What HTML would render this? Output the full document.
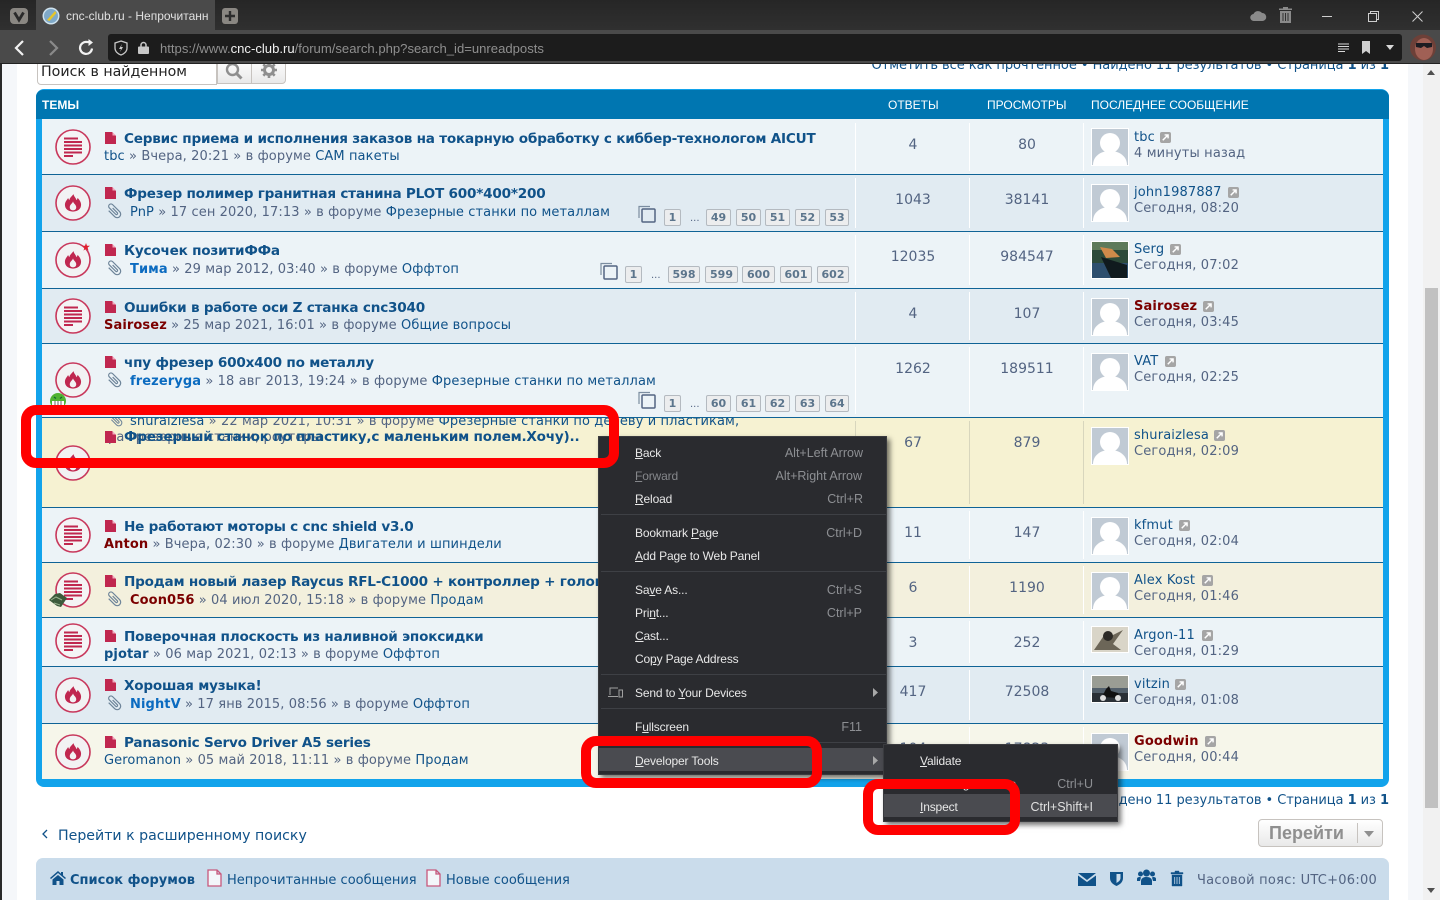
<!DOCTYPE html>
<html lang="ru"><head><meta charset="utf-8"><title>cnc-club.ru</title>
<style>
*{box-sizing:border-box}
html,body{margin:0;padding:0;width:1440px;height:900px;overflow:hidden;background:#fff}
body{position:relative;font-family:"DejaVu Sans","Liberation Sans",sans-serif;font-size:13px;color:#536482}
.a{position:absolute;white-space:nowrap;line-height:16px}
.row{position:absolute;left:42px;width:1341px}
.t{font-weight:bold;font-size:13.6px;letter-spacing:-.22px;color:#105289;left:124px;margin-top:1px}
.m{font-size:13px;color:#536482;margin-top:2px;letter-spacing:.1px}
.m b,.u b{font-weight:bold}
.bl{color:#105289}
.n{width:80px;text-align:center;font-size:14px;color:#536482;margin-top:1px}
.u{left:1134px;color:#105289;font-size:13px;margin-top:2px;letter-spacing:.15px}
.tm{left:1134px;color:#536482;font-size:13px;margin-top:2px;letter-spacing:.15px}
.k{margin-top:1px}
.div{position:absolute;width:1px;background:#fff}
.pg{position:absolute;height:17px;background:#ecedee;border:1px solid #b4bac0;border-radius:2px;font-size:11px;font-weight:bold;line-height:15px;color:#5c758c;text-align:center}
.sep{position:absolute;height:1px;background:#0f6396}
.mi{position:absolute;font-family:"Liberation Sans",sans-serif;font-size:12px;letter-spacing:-.15px;line-height:16px;color:#e8e8e8;white-space:nowrap}
.mi u{text-decoration:underline}
.sc{position:absolute;font-family:"Liberation Sans",sans-serif;font-size:12.5px;line-height:16px;color:#8d8f93;white-space:nowrap;text-align:right}
.ms{position:absolute;left:2px;height:1px;width:285px;background:#3e4045}
.rb{position:absolute;border:10px solid #f00;border-radius:15px;z-index:60}
svg{position:absolute;overflow:visible}
</style></head>
<body>
<svg width="0" height="0" style="position:absolute"><defs>
<symbol id="av" viewBox="0 0 38 38"><rect width="38" height="38" fill="#fff"/><rect x="1" y="1" width="36" height="36" fill="#c0cad4"/><circle cx="19" cy="15" r="10" fill="#fff"/><path d="M2 37C2 28 10 23 19 23S36 28 36 37Z" fill="#fff"/></symbol>
<symbol id="fl" viewBox="0 0 36 36"><circle cx="18" cy="18" r="17" fill="#f2f2f3" stroke="#c8385c" stroke-width="1.6"/><path transform="translate(2.700 2.800) scale(.85)" d="M18.500 7.500c1 3.500 3 4.500 3.500 7 .8-.6 1.300-1.500 1.300-2.600 2.700 2.400 4.200 5.300 4.200 8.100 0 4.600-3.500 8-9.500 8s-9.500-3.400-9.500-8c0-3.700 2.400-5.500 3.800-8 .4 1.200.8 1.900 1.500 2.500.2-2.800 2.700-4 4.700-7zM18 16c-.4 2.300-3.800 3.500-3.800 7 0 2.200 1.700 3.500 3.800 3.500s3.800-1.300 3.800-3.500c0-3.100-3.100-4.200-3.800-7z" fill="#c0274f" fill-rule="evenodd"/></symbol>
<symbol id="ls" viewBox="0 0 36 36"><circle cx="18" cy="18" r="17" fill="#f4f4f5" stroke="#c8385c" stroke-width="1.600"/><path d="M9 9.500h14M9 13h18M9 16.500h18M9 20h18M9 23.500h18M9 27h9" stroke="#c0274f" stroke-width="2" fill="none"/></symbol>
<symbol id="fi" viewBox="0 0 12 12"><path d="M0 0h7l4 4v8H0z" fill="#c0274f"/><path d="M7.500 0l3.500 3.500H7.500z" fill="#f2a9bd"/></symbol>
<symbol id="cl" viewBox="0 0 16 16"><path transform="rotate(-45 8 8)" d="M4.500 4v8.500a3.500 3.500 0 0 0 7 0V2.500a2.300 2.300 0 0 0-4.600 0V11.500a1.100 1.100 0 0 0 2.200 0V5" fill="none" stroke="#6d8499" stroke-width="1.200"/></symbol>
<symbol id="lk" viewBox="0 0 12 12"><rect width="12" height="12" rx="2" fill="#a5a5a5"/><path d="M3 9l5-5M5 3.200h3.800V7" stroke="#fff" stroke-width="1.600" fill="none"/></symbol>
<symbol id="cp" viewBox="0 0 18 18"><path d="M1 13V1.500h11" fill="none" stroke="#7b8da0" stroke-width="1.200"/><rect x="4" y="4" width="13" height="13" rx="1" fill="none" stroke="#536482" stroke-width="1.500"/></symbol>
</defs></svg>

<!-- page side -->
<div class="a" style="left:0;top:0;width:2px;height:900px;background:#2a2a2a"></div>
<div class="a" style="left:2px;top:64px;width:15px;height:836px;background:#f5f7fa"></div>
<div class="a" style="left:1408px;top:64px;width:15px;height:836px;background:#f5f7fa"></div>

<!-- search -->
<div class="a" style="left:37px;top:58px;width:180px;height:27px;background:#fff;border:1px solid #c7c3bf;border-radius:4px 0 0 4px;padding:4px 0 0 3px;font-size:14.2px;line-height:18px;color:#222">Поиск в найденном</div>
<div class="a" style="left:217px;top:58px;width:69px;height:26px;background:linear-gradient(#fff,#e9e9e9);border:1px solid #c7c3bf;border-radius:0 4px 4px 0"></div>
<div class="a" style="left:251px;top:60px;width:1px;height:24px;background:#c7c3bf"></div>
<svg style="left:225px;top:62px" width="18" height="18" viewBox="0 0 18 18"><circle cx="7.500" cy="7.500" r="5.500" fill="none" stroke="#8f8f8f" stroke-width="2.400"/><path d="M11.500 11.500l5 5" stroke="#8f8f8f" stroke-width="3"/></svg>
<svg style="left:261px;top:62px" width="16" height="16" viewBox="0 0 16 16"><circle cx="8" cy="8" r="4.500" fill="none" stroke="#8f8f8f" stroke-width="3"/><path d="M8 0v3M8 13v3M0 8h3M13 8h3M2.300 2.300l2.100 2.100M11.600 11.600l2.100 2.100M2.300 13.700l2.100-2.100M11.600 4.400l2.100-2.100" stroke="#8f8f8f" stroke-width="2.600"/></svg>
<div class="a" style="right:51px;top:58px;color:#105289;font-size:13px;letter-spacing:-.05px">Отметить все как прочтенное • Найдено 11 результатов • Страница <b>1</b> из <b>1</b></div>

<!-- forum block -->
<div class="a" style="left:36px;top:89px;width:1353px;height:698px;border-radius:8px;background:#12a3eb"></div>
<div class="a" style="left:36px;top:90px;width:1353px;height:29px;border-radius:7px 7px 0 0;background:#0076b1"></div>
<div class="a" style="left:42px;top:97px;color:#fff;font:bold 12px/16px 'Liberation Sans',sans-serif">ТЕМЫ</div>
<div class="a" style="left:888px;top:97px;color:#fff;font:12px/16px 'Liberation Sans',sans-serif">ОТВЕТЫ</div>
<div class="a" style="left:987px;top:97px;color:#fff;font:12px/16px 'Liberation Sans',sans-serif">ПРОСМОТРЫ</div>
<div class="a" style="left:1091px;top:97px;color:#fff;font:12px/16px 'Liberation Sans',sans-serif">ПОСЛЕДНЕЕ СООБЩЕНИЕ</div>

<div class="row" style="top:119px;height:55px;background:#ecf3f7"></div>
<div class="row" style="top:175px;height:56px;background:#e1ebf2"></div>
<div class="row" style="top:232px;height:56px;background:#ecf3f7"></div>
<div class="row" style="top:289px;height:54px;background:#e1ebf2"></div>
<div class="row" style="top:344px;height:73px;background:#ecf3f7"></div>
<div class="row" style="top:418px;height:89px;background:#f6f2d2;overflow:hidden">
 <svg style="left:67px;top:-5px" width="14" height="14"><use href="#cl"/></svg>
 <div class="a" style="left:88px;top:-4px;font-size:13px;letter-spacing:.1px;color:#536482"><span class="bl">shuraizlesa</span> » 22 мар 2021, 10:31 » в форуме <span class="bl">Фрезерные станки по дереву и пластикам,</span></div>
 <div class="a" style="left:66px;top:12px;font-size:13px;letter-spacing:.1px;color:#536482">раФрезерные станки, роутеры</div>
</div>
<div class="row" style="top:508px;height:54px;background:#ecf3f7"></div>
<div class="row" style="top:563px;height:54px;background:#f3f0dd"></div>
<div class="row" style="top:618px;height:48px;background:#ecf3f7"></div>
<div class="row" style="top:667px;height:56px;background:#e1ebf2"></div>
<div class="row" style="top:724px;height:55px;background:#f6f6ea"></div>
<div class="sep" style="left:42px;width:1341px;top:174px"></div>
<div class="sep" style="left:42px;width:1341px;top:231px"></div>
<div class="sep" style="left:42px;width:1341px;top:288px"></div>
<div class="sep" style="left:42px;width:1341px;top:343px"></div>
<div class="sep" style="left:42px;width:1341px;top:417px"></div>
<div class="sep" style="left:42px;width:1341px;top:507px"></div>
<div class="sep" style="left:42px;width:1341px;top:562px"></div>
<div class="sep" style="left:42px;width:1341px;top:617px"></div>
<div class="sep" style="left:42px;width:1341px;top:666px"></div>
<div class="sep" style="left:42px;width:1341px;top:723px"></div>

<!-- column dividers -->
<div class="div" style="left:855px;top:123px;height:48px"></div><div class="div" style="left:969px;top:123px;height:48px"></div><div class="div" style="left:1083px;top:123px;height:48px"></div>
<div class="div" style="left:855px;top:178px;height:50px"></div><div class="div" style="left:969px;top:178px;height:50px"></div><div class="div" style="left:1083px;top:178px;height:50px"></div>
<div class="div" style="left:855px;top:235px;height:50px"></div><div class="div" style="left:969px;top:235px;height:50px"></div><div class="div" style="left:1083px;top:235px;height:50px"></div>
<div class="div" style="left:855px;top:292px;height:48px"></div><div class="div" style="left:969px;top:292px;height:48px"></div><div class="div" style="left:1083px;top:292px;height:48px"></div>
<div class="div" style="left:855px;top:347px;height:67px"></div><div class="div" style="left:969px;top:347px;height:67px"></div><div class="div" style="left:1083px;top:347px;height:67px"></div>
<div class="div" style="left:855px;top:421px;height:83px;background:#d8d6bd"></div><div class="div" style="left:969px;top:421px;height:83px;background:#d8d6bd"></div><div class="div" style="left:1083px;top:421px;height:83px;background:#d8d6bd"></div>
<div class="div" style="left:855px;top:511px;height:48px"></div><div class="div" style="left:969px;top:511px;height:48px"></div><div class="div" style="left:1083px;top:511px;height:48px"></div>
<div class="div" style="left:855px;top:566px;height:48px"></div><div class="div" style="left:969px;top:566px;height:48px"></div><div class="div" style="left:1083px;top:566px;height:48px"></div>
<div class="div" style="left:855px;top:621px;height:42px"></div><div class="div" style="left:969px;top:621px;height:42px"></div><div class="div" style="left:1083px;top:621px;height:42px"></div>
<div class="div" style="left:855px;top:670px;height:50px"></div><div class="div" style="left:969px;top:670px;height:50px"></div><div class="div" style="left:1083px;top:670px;height:50px"></div>
<div class="div" style="left:855px;top:727px;height:49px"></div><div class="div" style="left:969px;top:727px;height:49px"></div><div class="div" style="left:1083px;top:727px;height:49px"></div>

<!-- row icons -->
<svg style="left:55px;top:129px" width="36" height="36"><use href="#ls"/></svg>
<svg style="left:55px;top:185px" width="36" height="36"><use href="#fl"/></svg>
<svg style="left:55px;top:242px" width="36" height="36"><use href="#fl"/></svg>
<svg style="left:55px;top:298px" width="36" height="36"><use href="#ls"/></svg>
<svg style="left:55px;top:362px" width="36" height="36"><use href="#fl"/></svg>
<svg style="left:55px;top:445px" width="36" height="36"><use href="#fl"/></svg>
<svg style="left:55px;top:517px" width="36" height="36"><use href="#ls"/></svg>
<svg style="left:55px;top:572px" width="36" height="36"><use href="#ls"/></svg>
<svg style="left:55px;top:623px" width="36" height="36"><use href="#ls"/></svg>
<svg style="left:55px;top:677px" width="36" height="36"><use href="#fl"/></svg>
<svg style="left:55px;top:734px" width="36" height="36"><use href="#fl"/></svg>
<svg style="left:82px;top:243px" width="8" height="8" viewBox="0 0 8 8"><path d="M4 0l1 2.800H8L5.600 4.600 6.500 7.600 4 5.800 1.500 7.600 2.400 4.600 0 2.800H3z" fill="#e0202f"/></svg>
<svg style="left:49px;top:393px" width="18" height="16" viewBox="0 0 18 16"><circle cx="9" cy="8" r="8" fill="#4fb332"/><rect x="3" y="8" width="12" height="6" fill="#fff"/><path d="M6 8v6M9 8v6M12 8v6" stroke="#666"/><path d="M5 4l2 1.500M13 4l-2 1.500" stroke="#163" stroke-width="1.300" fill="none"/></svg>
<svg style="left:48px;top:591px" width="20" height="17" viewBox="0 0 20 17"><path d="M1 9l6-6 5-1 7 5-6 9-4-1z" fill="#3c5a3a"/><path d="M3 9l5-3 6 3M6 12l6 2" stroke="#9ab28f" fill="none"/></svg>

<!-- file icons -->
<svg style="left:105px;top:132px" width="12" height="12"><use href="#fi"/></svg>
<svg style="left:105px;top:187px" width="12" height="12"><use href="#fi"/></svg>
<svg style="left:105px;top:244px" width="12" height="12"><use href="#fi"/></svg>
<svg style="left:105px;top:301px" width="12" height="12"><use href="#fi"/></svg>
<svg style="left:105px;top:356px" width="12" height="12"><use href="#fi"/></svg>
<svg style="left:105px;top:431px" width="12" height="12"><use href="#fi"/></svg>
<svg style="left:105px;top:520px" width="12" height="12"><use href="#fi"/></svg>
<svg style="left:105px;top:575px" width="12" height="12"><use href="#fi"/></svg>
<svg style="left:105px;top:630px" width="12" height="12"><use href="#fi"/></svg>
<svg style="left:105px;top:679px" width="12" height="12"><use href="#fi"/></svg>
<svg style="left:105px;top:736px" width="12" height="12"><use href="#fi"/></svg>
<!-- clips -->
<svg style="left:106px;top:203px" width="16" height="16"><use href="#cl"/></svg>
<svg style="left:106px;top:260px" width="16" height="16"><use href="#cl"/></svg>
<svg style="left:106px;top:372px" width="16" height="16"><use href="#cl"/></svg>
<svg style="left:106px;top:591px" width="16" height="16"><use href="#cl"/></svg>
<svg style="left:106px;top:695px" width="16" height="16"><use href="#cl"/></svg>

<!-- titles -->
<div class="a t" style="top:130px">Сервис приема и исполнения заказов на токарную обработку с киббер-технологом AICUT</div>
<div class="a t" style="top:185px">Фрезер полимер гранитная станина PLOT 600*400*200</div>
<div class="a t" style="top:242px">Кусочек позитиФФа</div>
<div class="a t" style="top:299px">Ошибки в работе оси Z станка cnc3040</div>
<div class="a t" style="top:354px">чпу фрезер 600x400 по металлу</div>
<div class="a t" style="top:428px">Фрезерный станок по пластику,с маленьким полем.Хочу)..</div>
<div class="a t" style="top:518px">Не работают моторы с cnc shield v3.0</div>
<div class="a t" style="top:573px">Продам новый лазер Raycus RFL-C1000 + контроллер + головка</div>
<div class="a t" style="top:628px">Поверочная плоскость из наливной эпоксидки</div>
<div class="a t" style="top:677px">Хорошая музыка!</div>
<div class="a t" style="top:734px">Panasonic Servo Driver A5 series</div>

<!-- meta -->
<div class="a m" style="left:104px;top:147px"><span class="bl">tbc</span> » Вчера, 20:21 » в форуме <span class="bl">CAM пакеты</span></div>
<div class="a m" style="left:130px;top:203px"><span class="bl">PnP</span> » 17 сен 2020, 17:13 » в форуме <span class="bl">Фрезерные станки по металлам</span></div>
<div class="a m" style="left:130px;top:260px"><b style="color:#0b6bc0">Тима</b> » 29 мар 2012, 03:40 » в форуме <span class="bl">Оффтоп</span></div>
<div class="a m" style="left:104px;top:316px"><b style="color:#7b0000">Sairosez</b> » 25 мар 2021, 16:01 » в форуме <span class="bl">Общие вопросы</span></div>
<div class="a m" style="left:130px;top:372px"><b style="color:#0b6bc0">frezeryga</b> » 18 авг 2013, 19:24 » в форуме <span class="bl">Фрезерные станки по металлам</span></div>
<div class="a m" style="left:104px;top:535px"><b style="color:#7b0000">Anton</b> » Вчера, 02:30 » в форуме <span class="bl">Двигатели и шпиндели</span></div>
<div class="a m" style="left:130px;top:591px"><b style="color:#7b0000">Coon056</b> » 04 июл 2020, 15:18 » в форуме <span class="bl">Продам</span></div>
<div class="a m" style="left:104px;top:645px"><b class="bl">pjotar</b> » 06 мар 2021, 02:13 » в форуме <span class="bl">Оффтоп</span></div>
<div class="a m" style="left:130px;top:695px"><b style="color:#0b6bc0">NightV</b> » 17 янв 2015, 08:56 » в форуме <span class="bl">Оффтоп</span></div>
<div class="a m" style="left:104px;top:751px"><span class="bl">Geromanon</span> » 05 май 2018, 11:11 » в форуме <span class="bl">Продам</span></div>

<!-- pagination -->
<svg style="left:638px;top:205px" width="18" height="18"><use href="#cp"/></svg>
<div class="pg" style="left:664px;top:209px;width:17px">1</div><div class="a" style="left:690px;top:211px;font-size:10px;color:#536482">...</div>
<div class="pg" style="left:706px;top:209px;width:25px">49</div><div class="pg" style="left:736px;top:209px;width:25px">50</div><div class="pg" style="left:765px;top:209px;width:25px">51</div><div class="pg" style="left:795px;top:209px;width:25px">52</div><div class="pg" style="left:825px;top:209px;width:24px">53</div>
<svg style="left:600px;top:262px" width="18" height="18"><use href="#cp"/></svg>
<div class="pg" style="left:625px;top:266px;width:17px">1</div><div class="a" style="left:651px;top:268px;font-size:10px;color:#536482">...</div>
<div class="pg" style="left:668px;top:266px;width:32px">598</div><div class="pg" style="left:705px;top:266px;width:33px">599</div><div class="pg" style="left:742px;top:266px;width:33px">600</div><div class="pg" style="left:780px;top:266px;width:32px">601</div><div class="pg" style="left:817px;top:266px;width:32px">602</div>
<svg style="left:638px;top:391px" width="18" height="18"><use href="#cp"/></svg>
<div class="pg" style="left:664px;top:395px;width:17px">1</div><div class="a" style="left:690px;top:397px;font-size:10px;color:#536482">...</div>
<div class="pg" style="left:706px;top:395px;width:25px">60</div><div class="pg" style="left:736px;top:395px;width:25px">61</div><div class="pg" style="left:765px;top:395px;width:25px">62</div><div class="pg" style="left:795px;top:395px;width:25px">63</div><div class="pg" style="left:825px;top:395px;width:24px">64</div>

<!-- counts -->
<div class="a n" style="left:873px;top:136px">4</div><div class="a n" style="left:987px;top:136px">80</div>
<div class="a n" style="left:873px;top:191px">1043</div><div class="a n" style="left:987px;top:191px">38141</div>
<div class="a n" style="left:873px;top:248px">12035</div><div class="a n" style="left:987px;top:248px">984547</div>
<div class="a n" style="left:873px;top:305px">4</div><div class="a n" style="left:987px;top:305px">107</div>
<div class="a n" style="left:873px;top:360px">1262</div><div class="a n" style="left:987px;top:360px">189511</div>
<div class="a n" style="left:873px;top:434px">67</div><div class="a n" style="left:987px;top:434px">879</div>
<div class="a n" style="left:873px;top:524px">11</div><div class="a n" style="left:987px;top:524px">147</div>
<div class="a n" style="left:873px;top:579px">6</div><div class="a n" style="left:987px;top:579px">1190</div>
<div class="a n" style="left:873px;top:634px">3</div><div class="a n" style="left:987px;top:634px">252</div>
<div class="a n" style="left:873px;top:683px">417</div><div class="a n" style="left:987px;top:683px">72508</div>
<div class="a n" style="left:873px;top:740px">104</div><div class="a n" style="left:987px;top:740px">17823</div>

<!-- avatars -->
<svg style="left:1091px;top:128px" width="38" height="38"><use href="#av"/></svg>
<svg style="left:1091px;top:184px" width="38" height="38"><use href="#av"/></svg>
<svg style="left:1091px;top:241px" width="38" height="38" viewBox="0 0 38 38"><rect width="38" height="38" fill="#fff"/><rect x="1" y="1" width="36" height="36" fill="#2d4a3a"/><rect x="1" y="1" width="36" height="8" fill="#5e7a5a"/><rect x="1" y="22" width="36" height="15" fill="#2e4f6e"/><path d="M10 16L36 24V37H20Z" fill="#101a1e"/><path d="M9 6l12 2 8 8-14 1z" fill="#cf8a4a"/></svg>
<svg style="left:1091px;top:298px" width="38" height="38"><use href="#av"/></svg>
<svg style="left:1091px;top:353px" width="38" height="38"><use href="#av"/></svg>
<svg style="left:1091px;top:427px" width="38" height="38"><use href="#av"/></svg>
<svg style="left:1091px;top:517px" width="38" height="38"><use href="#av"/></svg>
<svg style="left:1091px;top:572px" width="38" height="38"><use href="#av"/></svg>
<svg style="left:1091px;top:626px" width="38" height="27" viewBox="0 0 38 27"><rect width="38" height="27" fill="#fff"/><rect x="1" y="1" width="36" height="25" fill="#d9d5c8"/><path d="M3 24L14 8l6 2 12-6-10 14 8 6H8z" fill="#6c6658"/><circle cx="17" cy="10" r="5" fill="#2c2a26"/></svg>
<svg style="left:1091px;top:675px" width="38" height="28" viewBox="0 0 38 28"><rect width="38" height="28" fill="#fff"/><rect x="1" y="1" width="36" height="26" fill="#53606b"/><rect x="1" y="1" width="36" height="12" fill="#9a9d94"/><rect x="1" y="18" width="36" height="9" fill="#2a3036"/><path d="M11 22l4-8 3-3 2 5 7 2 1 5z" fill="#111"/><circle cx="12" cy="23" r="3" fill="#ddd"/><circle cx="27" cy="23" r="3" fill="#ddd"/></svg>
<svg style="left:1091px;top:733px" width="38" height="38"><use href="#av"/></svg>

<!-- users -->
<div class="a u" style="top:128px">tbc</div><svg class="k" style="left:1160px;top:131px" width="11" height="11"><use href="#lk"/></svg><div class="a tm" style="top:144px">4 минуты назад</div>
<div class="a u" style="top:183px">john1987887</div><svg class="k" style="left:1228px;top:186px" width="11" height="11"><use href="#lk"/></svg><div class="a tm" style="top:199px">Сегодня, 08:20</div>
<div class="a u" style="top:240px">Serg</div><svg class="k" style="left:1170px;top:243px" width="11" height="11"><use href="#lk"/></svg><div class="a tm" style="top:256px">Сегодня, 07:02</div>
<div class="a u" style="top:297px"><b style="color:#7b0000">Sairosez</b></div><svg class="k" style="left:1203px;top:300px" width="11" height="11"><use href="#lk"/></svg><div class="a tm" style="top:313px">Сегодня, 03:45</div>
<div class="a u" style="top:352px">VAT</div><svg class="k" style="left:1165px;top:355px" width="11" height="11"><use href="#lk"/></svg><div class="a tm" style="top:368px">Сегодня, 02:25</div>
<div class="a u" style="top:426px">shuraizlesa</div><svg class="k" style="left:1214px;top:429px" width="11" height="11"><use href="#lk"/></svg><div class="a tm" style="top:442px">Сегодня, 02:09</div>
<div class="a u" style="top:516px">kfmut</div><svg class="k" style="left:1179px;top:519px" width="11" height="11"><use href="#lk"/></svg><div class="a tm" style="top:532px">Сегодня, 02:04</div>
<div class="a u" style="top:571px">Alex Kost</div><svg class="k" style="left:1202px;top:574px" width="11" height="11"><use href="#lk"/></svg><div class="a tm" style="top:587px">Сегодня, 01:46</div>
<div class="a u" style="top:626px">Argon-11</div><svg class="k" style="left:1202px;top:629px" width="11" height="11"><use href="#lk"/></svg><div class="a tm" style="top:642px">Сегодня, 01:29</div>
<div class="a u" style="top:675px">vitzin</div><svg class="k" style="left:1175px;top:678px" width="11" height="11"><use href="#lk"/></svg><div class="a tm" style="top:691px">Сегодня, 01:08</div>
<div class="a u" style="top:732px"><b style="color:#7b0000">Goodwin</b></div><svg class="k" style="left:1205px;top:735px" width="11" height="11"><use href="#lk"/></svg><div class="a tm" style="top:748px">Сегодня, 00:44</div>

<!-- below table -->
<div class="a" style="right:51px;top:793px;color:#105289;font-size:13px;letter-spacing:-.05px">Найдено 11 результатов • Страница <b>1</b> из <b>1</b></div>
<svg style="left:41px;top:829px" width="8" height="10" viewBox="0 0 8 10"><path d="M6 1L2 5l4 4" fill="none" stroke="#105289" stroke-width="1.300"/></svg>
<div class="a" style="left:58px;top:828px;font-size:14.150px;color:#105289">Перейти к расширенному поиску</div>
<div class="a" style="left:1258px;top:819px;width:125px;height:28px;border:1px solid #c7c3bf;border-radius:4px;background:linear-gradient(#fff,#e9e9e9)"></div>
<div class="a" style="left:1269px;top:825px;font:bold 18px/16px 'Liberation Sans',sans-serif;color:#8f8f8f">Перейти</div>
<div class="a" style="left:1357px;top:823px;width:1px;height:20px;background:#c7c3bf"></div>
<svg style="left:1364px;top:831px" width="11" height="6"><path d="M0 0h10L5 6z" fill="#8f8f8f"/></svg>

<!-- footer -->
<div class="a" style="left:36px;top:858px;width:1353px;height:42px;background:#cadceb;border-radius:7px 7px 0 0"></div>
<svg style="left:50px;top:871px" width="16" height="14" viewBox="0 0 16 14"><path d="M8 0L0 7l1 1 7-6 7 6 1-1-3-2.600V1h-2v1.700zM2.500 8.500L8 4l5.500 4.500V14H9.500v-4h-3v4H2.500z" fill="#105289"/></svg>
<div class="a" style="left:70px;top:873px;font-size:13px;font-weight:bold;color:#105289">Список форумов</div>
<svg style="left:207px;top:869px" width="15" height="18" viewBox="0 0 15 18"><path d="M1 1h9l4 4v12H1zM10 1v4h4" fill="#f3f6fa" stroke="#c8587c" stroke-width="1.300"/></svg>
<div class="a" style="left:227px;top:873px;font-size:13px;color:#105289">Непрочитанные сообщения</div>
<svg style="left:426px;top:869px" width="15" height="18" viewBox="0 0 15 18"><path d="M1 1h9l4 4v12H1zM10 1v4h4" fill="#f3f6fa" stroke="#c8587c" stroke-width="1.300"/></svg>
<div class="a" style="left:446px;top:873px;font-size:13px;color:#105289">Новые сообщения</div>
<svg style="left:1078px;top:872px" width="18" height="14" viewBox="0 0 18 14"><path d="M0 1h18L9 8zM0 3.500L9 10l9-6.500V14H0z" fill="#105289"/></svg>
<svg style="left:1110px;top:871px" width="13" height="15" viewBox="0 0 13 15"><path d="M0 1h13v6c0 4-3 6.500-6.500 8C3 13.500 0 11 0 7z" fill="#105289"/><path d="M6.500 3h4v4c0 2-1.500 3.500-4 5z" fill="#cadceb"/></svg>
<svg style="left:1137px;top:869px" width="19" height="17" viewBox="0 0 19 17"><circle cx="9.500" cy="4" r="3.500" fill="#105289"/><circle cx="3.500" cy="5" r="2.500" fill="#105289"/><circle cx="15.500" cy="5" r="2.500" fill="#105289"/><path d="M4 16v-4c0-2.500 2-4 5.500-4S15 9.500 15 12v4zM0 12V10c0-1.500 1-2 3-2l1 .5L3 12zM19 12V10c0-1.500-1-2-3-2l-1 .5L16 12z" fill="#105289"/></svg>
<svg style="left:1171px;top:871px" width="12" height="15" viewBox="0 0 12 15"><path d="M4 0h4v1.500h4V3H0V1.500h4zM1 4h10v11H1zM3.500 6v7M6 6v7M8.500 6v7" fill="#105289" stroke="#105289" stroke-width=".4"/><path d="M3.700 6v7M6 6v7M8.300 6v7" stroke="#cadceb" stroke-width=".8"/></svg>
<div class="a" style="right:63px;top:873px;font-size:13px;letter-spacing:.25px;color:#536482">Часовой пояс: UTC+06:00</div>

<!-- page scrollbar -->
<div class="a" style="left:1423px;top:64px;width:17px;height:836px;background:#f1f1f1"></div>
<div class="a" style="left:1425px;top:288px;width:13px;height:520px;background:#c1c1c1"></div>
<svg style="left:1427px;top:70px" width="9" height="6"><path d="M0 5h8L4 0z" fill="#505050"/></svg>
<svg style="left:1427px;top:888px" width="9" height="6"><path d="M0 0h8L4 5z" fill="#505050"/></svg>

<!-- browser chrome -->
<div class="a" style="left:0;top:0;width:1440px;height:30px;background:linear-gradient(#262626,#303030);z-index:30"></div>
<div class="a" style="left:0;top:30px;width:1440px;height:34px;background:#4a4a4a;z-index:30"></div>
<div class="a" style="left:0;top:63px;width:1440px;height:1px;background:#222;z-index:30"></div>
<div class="a" style="left:36px;top:0;width:179px;height:32px;background:#4a4a4a;z-index:31"></div>
<svg style="left:10px;top:8px;z-index:32" width="18" height="16" viewBox="0 0 18 16"><rect width="18" height="16" rx="4" fill="#8a8782"/><path d="M4.500 4.500L9 12l4.500-7.500" fill="none" stroke="#2a2a2a" stroke-width="2.800"/></svg>
<svg style="left:42px;top:7px;z-index:32" width="18" height="18" viewBox="0 0 18 18"><circle cx="9" cy="9" r="8.500" fill="#cfe2ee"/><circle cx="9" cy="9" r="7" fill="#7fa9c8"/><path d="M5 13L13 4l1.500 2-7 8z" fill="#e6c62a"/></svg>
<div class="a" style="left:66px;top:8px;width:143px;overflow:hidden;z-index:32;font:12px/16px 'Liberation Sans',sans-serif;color:#e0e0e0">cnc-club.ru - Непрочитанные сообщения</div>
<svg style="left:222px;top:8px;z-index:32" width="16" height="16" viewBox="0 0 16 16"><rect width="16" height="16" rx="3" fill="#8a8782"/><path d="M8 3v10M3 8h10" stroke="#2d2d2d" stroke-width="2.400"/></svg>
<svg style="left:12px;top:39px;z-index:32" width="14" height="18" viewBox="0 0 14 18"><path d="M11 2L4 9l7 7" fill="none" stroke="#f2f2f2" stroke-width="2.200"/></svg>
<svg style="left:47px;top:39px;z-index:32" width="14" height="18" viewBox="0 0 14 18"><path d="M3 2l7 7-7 7" fill="none" stroke="#8a8a8a" stroke-width="2.200"/></svg>
<svg style="left:78px;top:39px;z-index:32" width="17" height="17" viewBox="0 0 17 17"><path d="M14 9.500A6 6 0 1 1 9 3h3" fill="none" stroke="#f2f2f2" stroke-width="2.200"/><path d="M10.500 0v7L15 3.500z" fill="#f2f2f2"/></svg>
<div class="a" style="left:108px;top:34px;width:1294px;height:27px;background:#1c1c1c;border-radius:3px;z-index:32"></div>
<svg style="left:114px;top:40px;z-index:33" width="14" height="16" viewBox="0 0 14 16"><path d="M7 1l6 2v5c0 3.500-3 6-6 7-3-1-6-3.500-6-7V3z" fill="none" stroke="#c8c8c8" stroke-width="1.300"/><path d="M8 4L5 9h2l-1 3 3-5H7z" fill="#c8c8c8"/></svg>
<svg style="left:138px;top:41px;z-index:33" width="11" height="13" viewBox="0 0 11 13"><path d="M3 6V4a2.500 2.500 0 0 1 5 0v2" fill="none" stroke="#c8c8c8" stroke-width="1.500"/><rect y="5.500" width="11" height="7.500" rx="1" fill="#c8c8c8"/></svg>
<div class="a" style="left:160px;top:41px;z-index:33;font:13.100px/16px 'Liberation Sans',sans-serif;color:#8f8f8f">https://www.<span style="color:#f0f0f0">cnc-club.ru</span>/forum/search.php?search_id=unreadposts</div>
<svg style="left:1338px;top:43px;z-index:33" width="11" height="9"><path d="M0 1h11M0 3.500h11M0 6h11M0 8.500h7" stroke="#d8d8d8" stroke-width="1"/></svg>
<svg style="left:1362px;top:41px;z-index:33" width="8" height="13"><path d="M0 0h8v13L4 10 0 13z" fill="#cfcfcf"/></svg>
<svg style="left:1386px;top:45px;z-index:33" width="8" height="5"><path d="M0 0h8L4 5z" fill="#d8d8d8"/></svg>
<svg style="left:1410px;top:34px;z-index:33" width="26" height="27" viewBox="0 0 26 27"><circle cx="13" cy="13.500" r="13" fill="#6d4038"/><ellipse cx="14" cy="15" rx="9" ry="11" fill="#a06055"/><path d="M6 9h16v4l-5 1-3-2-3 2-5-1z" fill="#1c1c22"/></svg>
<svg style="left:1250px;top:10px;z-index:33" width="16" height="11" viewBox="0 0 16 11"><path d="M4 11a3.500 3.500 0 0 1-.5-7A5 5 0 0 1 12 3a4 4 0 0 1 .5 8z" fill="#8a8a8a"/></svg>
<svg style="left:1279px;top:7px;z-index:33" width="13" height="16" viewBox="0 0 13 16"><path d="M4 0h5v1.500h4V3H0V1.500h4zM1 4h11v12H1z" fill="#8a8a8a"/><path d="M4 6v8M6.500 6v8M9 6v8" stroke="#303030" stroke-width="1"/></svg>
<div class="a" style="left:1322px;top:16px;width:10px;height:1px;background:#cfcfcf;z-index:33"></div>
<svg style="left:1368px;top:11px;z-index:33" width="11" height="11"><path d="M2.500 2.500V.5h8v8h-2M.5 2.500h8v8h-8z" fill="none" stroke="#cfcfcf"/></svg>
<svg style="left:1412px;top:11px;z-index:33" width="11" height="11"><path d="M.5.500l10 10M10.500.5l-10 10" stroke="#cfcfcf"/></svg>

<!-- context menu -->
<div class="a" style="left:598px;top:436px;width:289px;height:339px;background:#2a2b2f;border:1px solid #3a3b3f;z-index:40;box-shadow:3px 3px 5px rgba(0,0,0,.55)">
 <div class="ms" style="top:77px"></div><div class="ms" style="top:134px"></div><div class="ms" style="top:237px"></div><div class="ms" style="top:271px"></div><div class="ms" style="top:305px"></div>
 <div style="position:absolute;left:0;top:311px;width:287px;height:23px;background:#4a4b50"></div>
 <div class="mi" style="left:36px;top:8px"><u>B</u>ack</div><div class="sc" style="right:23px;top:8px">Alt+Left Arrow</div>
 <div class="mi" style="left:36px;top:31px;color:#85878b"><u>F</u>orward</div><div class="sc" style="right:24px;top:31px">Alt+Right Arrow</div>
 <div class="mi" style="left:36px;top:54px"><u>R</u>eload</div><div class="sc" style="right:23px;top:54px">Ctrl+R</div>
 <div class="mi" style="left:36px;top:88px">Bookmark <u>P</u>age</div><div class="sc" style="right:24px;top:88px">Ctrl+D</div>
 <div class="mi" style="left:36px;top:111px"><u>A</u>dd Page to Web Panel</div>
 <div class="mi" style="left:36px;top:145px">Sa<u>v</u>e As...</div><div class="sc" style="right:24px;top:145px">Ctrl+S</div>
 <div class="mi" style="left:36px;top:168px">Pri<u>n</u>t...</div><div class="sc" style="right:24px;top:168px">Ctrl+P</div>
 <div class="mi" style="left:36px;top:191px"><u>C</u>ast...</div>
 <div class="mi" style="left:36px;top:214px">Co<u>p</u>y Page Address</div>
 <svg style="left:9px;top:250px" width="15" height="11" viewBox="0 0 15 11"><path d="M2 8V1h8M0 9.500h10" fill="none" stroke="#a0a0a0"/><rect x="11" y="3" width="3.500" height="7" fill="none" stroke="#a0a0a0"/></svg>
 <div class="mi" style="left:36px;top:248px">Send to <u>Y</u>our Devices</div>
 <svg style="left:274px;top:251px" width="6" height="9"><path d="M0 0l5 4.500L0 9z" fill="#a8a8a8"/></svg>
 <div class="mi" style="left:36px;top:282px">F<u>u</u>llscreen</div><div class="sc" style="right:24px;top:282px">F11</div>
 <div class="mi" style="left:36px;top:316px"><u>D</u>eveloper Tools</div>
 <svg style="left:274px;top:319px" width="6" height="9"><path d="M0 0l5 4.500L0 9z" fill="#a8a8a8"/></svg>
</div>
<div class="a" style="left:883px;top:744px;width:235px;height:78px;background:#2a2b2f;border:1px solid #3a3b3f;z-index:41;box-shadow:3px 3px 5px rgba(0,0,0,.55)">
 <div style="position:absolute;left:0;top:49px;width:233px;height:23px;background:#4a4b50"></div>
 <div class="mi" style="left:36px;top:8px"><u>V</u>alidate</div>
 <div class="mi" style="left:36px;top:31px">View Page Source</div><div class="sc" style="right:24px;top:31px">Ctrl+U</div>
 <div class="mi" style="left:36px;top:54px"><u>I</u>nspect</div><div class="sc" style="right:24px;top:54px;color:#e0e0e0">Ctrl+Shift+I</div>
</div>

<!-- red annotation boxes -->
<div class="rb" style="left:21px;top:405px;width:598px;height:63px"></div>
<div class="rb" style="left:581px;top:736px;width:241px;height:52px"></div>
<div class="rb" style="left:863px;top:779px;width:157px;height:56px"></div>
</body></html>
